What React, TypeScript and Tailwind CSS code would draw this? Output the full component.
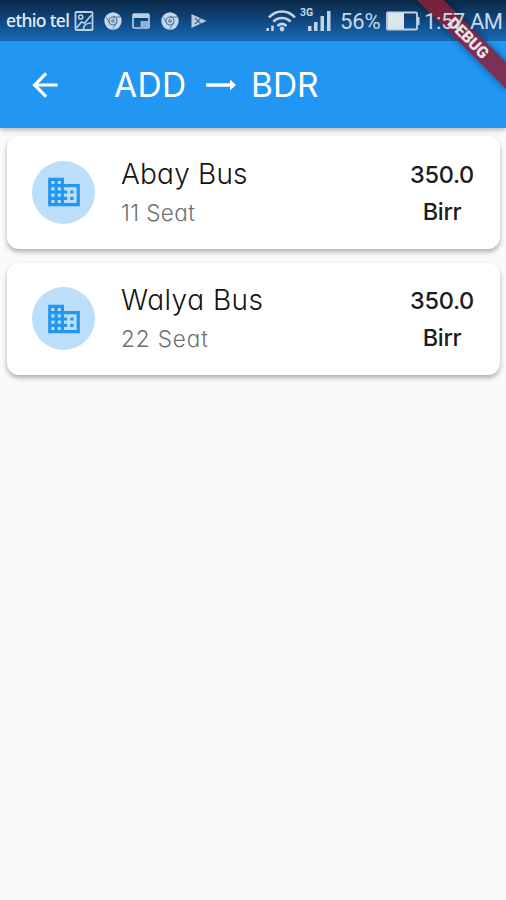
import { MdArrowBack, MdBusiness } from "react-icons/md";

const buses = [
  { name: "Abay Bus", seats: "11 Seat", price: "350.0", nameCls: "tracking-[0.2px]", seatCls: "tracking-[0.4px]" },
  { name: "Walya Bus", seats: "22 Seat", price: "350.0", nameCls: "tracking-[0.5px]", seatCls: "tracking-[0.9px]" },
];

function Chrome() {
  return (
    <svg width="18" height="18" viewBox="0 0 18 18" className="shrink-0">
      <circle cx="9" cy="9" r="8.7" fill="#c6d7e7" />
      <circle cx="9" cy="9" r="4" fill="none" stroke="#3d719f" strokeWidth="1.1" />
      <path d="M9 5h7.500M5.500 11 2.500 5.500M12.400 11 9 16.500" stroke="#3d719f" strokeWidth="0.9" />
      <circle cx="9" cy="9" r="2" fill="#6f97bb" />
    </svg>
  );
}

function StatusBar() {
  return (
    <div className="relative flex h-[41px] shrink-0 items-center bg-linear-to-b from-[#0b2948] via-[#0f4780] to-[#176bb9] pl-[6px] text-[#c9d8e6]">
      <span className="w-[68px] whitespace-nowrap font-['Noto_Sans',sans-serif] text-[17.500px] font-medium leading-none tracking-[-0.65px] text-[#e4edf5]">ethio tel</span>
      <svg width="20" height="20" viewBox="0 0 19 20" fill="none" stroke="#bdd0e2" strokeWidth="1.8" className="shrink-0">
        <rect x="1" y="1" width="17" height="18" rx="1" />
        <circle cx="6.200" cy="6" r="2.100" strokeWidth="1.5" />
        <path d="M2 17 7 11l3 1 7-8M9 18c0-4 3-6 8-6" strokeWidth="1.6" />
      </svg>
      <span className="ml-[10px] flex"><Chrome /></span>
      <svg width="18" height="16" viewBox="0 0 18 16" className="ml-[10px] shrink-0">
        <rect x="1" y="1" width="16" height="14" rx="1" fill="none" stroke="#bdd0e2" strokeWidth="1.6" />
        <path d="M1 1h16v4H1z" fill="#bdd0e2" />
        <path d="M8.500 8H16v6.500H8.500z" fill="#8fb1d1" />
      </svg>
      <span className="ml-[11px] flex"><Chrome /></span>
      <svg width="16" height="16" viewBox="0 0 16 16" className="ml-[12px] shrink-0">
        <path d="M0.500 1 15.500 8 .5 15z" fill="#b9cde1" />
        <path d="m4 5 6 6M4 11l6-6" stroke="#3b6c9b" strokeWidth="1.1" />
      </svg>
      <svg width="31" height="22" viewBox="0 0 31 22" fill="none" stroke="#c3d3e2" strokeWidth="2.6" className="ml-[59px] shrink-0">
        <path d="M3 7.500C10-.5 22-.5 29 7.500M7.300 11.700c5-5 12.400-5 17.400 0M11.500 16c3-2.700 6-2.700 9 0" />
        <circle cx="16" cy="19" r="2.400" fill="#c3d3e2" stroke="none" />
        <path d="M1.700 18v3M6.500 15.500v5.500" strokeWidth="2.6" />
      </svg>
      <div className="relative ml-[3px] h-[24px] w-[32px] shrink-0">
        <span className="absolute -top-[1px] left-0 font-[Roboto,sans-serif] text-[10.500px] font-bold leading-[10px]">3G</span>
        <svg width="32" height="24" viewBox="0 0 32 24" fill="#c3d3e2">
          <path d="M8 17h3.500v5H8zM14 13h3.500v9H14zM20.500 7H24v15h-3.500zM27 2h3.500v20H27z" />
        </svg>
      </div>
      <span className="ml-[8px] mt-[2px] w-[43px] whitespace-nowrap font-[Roboto,sans-serif] text-[22px] leading-none tracking-[-0.1px]">56%</span>
      <svg width="34" height="20" viewBox="0 0 34 20" className="ml-[3px] shrink-0">
        <rect x="1" y="1.500" width="30" height="17" rx="1" fill="none" stroke="#c3d3e2" strokeWidth="1.800" />
        <path d="M2 2h16v16H2z" fill="#dce5ee" />
        <path d="M31 6h2.500v8H31z" fill="#c3d3e2" />
      </svg>
      <span className="relative z-20 ml-[4px] mt-[2px] whitespace-nowrap font-[Roboto,sans-serif] text-[22px] leading-none tracking-[-0.400px]">1:57 AM</span>
    </div>
  );
}

export default function App() {
  return (
    <div className="relative flex h-[900px] w-[506px] flex-col overflow-hidden bg-[#fafafa] font-[Inter,sans-serif]">
      <div className="relative z-10 shadow-[0_2px_5px_rgba(0,0,0,0.28)]">
        <StatusBar />
        <header className="flex h-[87px] items-center bg-[#2196f3] pl-[26px] text-white">
          <MdArrowBack size={38} />
          <h1 className="ml-[50px] flex items-center text-[33.500px] leading-none">
            <span className="w-[92px] pt-[2px] tracking-[0.4px]">ADD</span>
            <svg width="30" height="14" viewBox="0 0 30 14" className="shrink-0">
              <path d="M0 5.300h24V1.500l6 5.500-6 5.500V8.700H0z" fill="white" />
            </svg>
            <span className="ml-[15px] pt-[2px]">BDR</span>
          </h1>
        </header>
        <div className="pointer-events-none absolute left-full top-0 origin-top-left rotate-45">
          <div className="absolute -left-[63px] top-[44px] flex h-[19px] w-[126px] items-center justify-center bg-[#8b2038]/85 font-[Roboto,sans-serif] text-[16px] font-black leading-none tracking-[-0.2px] text-[#eee3e8] shadow-[0_0_7px_rgba(0,0,0,0.45)]">DEBUG</div>
        </div>
      </div>
      <main className="flex flex-col gap-[14px] pl-[7px] pr-[6px] pt-[8px]">
        {buses.map((bus) => (
          <article key={bus.name} className="flex h-[112.500px] items-center rounded-[12px] bg-white shadow-[0_3px_5px_rgba(0,0,0,0.3)]">
            <div className="ml-[25px] flex size-[63px] items-center justify-center rounded-full bg-[#bbdefb] text-[#2196f3]">
              <MdBusiness size={38} />
            </div>
            <div className="ml-[26px] flex-1 pt-[3px] [font-feature-settings:'cv11']">
              <h2 className={`text-[28px] font-light leading-[38px] text-[#151515] ${bus.nameCls}`}>{bus.name}</h2>
              <p className={`text-[22.500px] font-light leading-[40px] text-[#707070] ${bus.seatCls}`}>{bus.seats}</p>
            </div>
            <div className="mr-[26px] w-[64px] whitespace-nowrap pt-px text-center text-[23.500px] font-medium leading-[37px] tracking-[-0.3px] text-[#1c1c1c]">
              <div>{bus.price}</div>
              <div>Birr</div>
            </div>
          </article>
        ))}
      </main>
    </div>
  );
}
